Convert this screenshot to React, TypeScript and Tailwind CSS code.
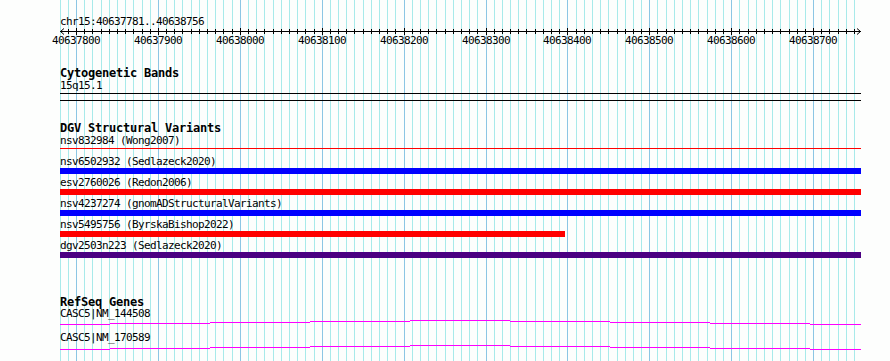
import React from 'react';

const START = 40637800;
const PX = 0.819;
const toX = (bp: number) => 76 + (bp - START) * PX;

const gridBps: number[] = [];
for (let bp = 40637780; bp <= 40638750; bp += 10) gridBps.push(bp);

const variants = [
  { label: 'nsv832984 (Wong2007)', color: 'bg-[#ff0000]', thin: true, width: 801 },
  { label: 'nsv6502932 (Sedlazeck2020)', color: 'bg-[#0000ff]', thin: false, width: 801 },
  { label: 'esv2760026 (Redon2006)', color: 'bg-[#ff0000]', thin: false, width: 801 },
  { label: 'nsv4237274 (gnomADStructuralVariants)', color: 'bg-[#0000ff]', thin: false, width: 801 },
  { label: 'nsv5495756 (ByrskaBishop2022)', color: 'bg-[#ff0000]', thin: false, width: 505 },
  { label: 'dgv2503n223 (Sedlazeck2020)', color: 'bg-[#4b0082]', thin: false, width: 801 },
];

// stepped magenta transcript line: [x0, x1, y]
const geneSegs: [number, number, number][] = [
  [0, 50, 5], [50, 150, 4], [150, 250, 3], [250, 350, 2], [350, 450, 1],
  [450, 550, 2], [550, 650, 3], [650, 750, 4], [750, 801, 5],
];

const txt = "text-[11px] leading-[11px] tracking-[-0.62px] h-[11px] whitespace-nowrap";
const title = "text-[12px] leading-[11px] tracking-[-0.22px] font-bold h-[11px] whitespace-nowrap";

const Grid = () => (
  <svg className="absolute left-0 top-0" width={890} height={361}>
    {gridBps.map((bp) => {
      const x = Math.round(toX(bp)) + 0.5;
      const major = bp % 100 === 0;
      return (
        <line key={bp} x1={x} x2={x} y1={0} y2={361} stroke={major ? '#8cc6e4' : '#a8eaea'} strokeWidth={1} />
      );
    })}
  </svg>
);

const Ruler = () => {
  const ticks = gridBps.filter((bp) => bp > 40637781);
  return (
    <svg width={802} height={20} className="block overflow-visible">
      <line x1={0} x2={801} y1={4.5} y2={4.5} stroke="#000" strokeWidth={1} />
      <polyline points="4,1.5 0.5,4.5 4,7.5" fill="none" stroke="#000" strokeWidth={1} />
      <polyline points="797,1.5 800.5,4.5 797,7.5" fill="none" stroke="#000" strokeWidth={1} />
      {ticks.map((bp) => {
        const x = Math.round(toX(bp)) - 60 + 0.5;
        const major = bp % 100 === 0;
        return <line key={bp} x1={x} x2={x} y1={major ? 1 : 2} y2={major ? 8 : 7} stroke="#000" strokeWidth={1} />;
      })}
      {ticks.filter((bp) => bp % 100 === 0).map((bp) => (
        <text
          key={'l' + bp}
          x={Math.round(toX(bp)) - 60}
          y={17}
          textAnchor="middle"
          fontSize={11}
          letterSpacing={-0.62}
          fontFamily="'DejaVu Sans Mono', monospace"
          fill="#000"
        >
          {bp}
        </text>
      ))}
    </svg>
  );
};

const GeneRow = ({ label, offset }: { label: string; offset: number }) => (
  <div>
    <div className={txt}>{label}</div>
    <svg width={801} height={13} className="block">
      {geneSegs.map(([x0, x1, y], i) => (
        <rect key={i} x={x0} y={y + offset} width={x1 - x0} height={1} fill="#ff00ff" />
      ))}
    </svg>
  </div>
);

export default function App() {
  return (
    <div className="relative w-[890px] h-[361px] overflow-hidden bg-[#fdfefd] text-black font-['DejaVu_Sans_Mono',monospace]">
      <Grid />
      <div className="relative pl-[60px] pt-[16px] w-[861px]">
        {/* Ruler */}
        <div className={txt}>chr15:40637781..40638756</div>
        <Ruler />

        {/* Cytogenetic Bands */}
        <div className={`${title} mt-[21px]`}>Cytogenetic Bands</div>
        <div className={`${txt} mt-[1px]`}>15q15.1</div>
        <div className="mt-[2px] h-[8px] border-y border-black" />

        {/* DGV Structural Variants */}
        <div className={`${title} mt-[22px]`}>DGV Structural Variants</div>
        <div className="mt-[1px]">
          {variants.map((v) => (
            <div key={v.label} className="h-[21px]">
              <div className={txt}>{v.label}</div>
              <div className="mt-[1px] h-[6px]">
                {v.thin ? (
                  <div className={`${v.color} h-px mt-[2px]`} style={{ width: v.width }} />
                ) : (
                  <div className={`${v.color} h-[6px]`} style={{ width: v.width }} />
                )}
              </div>
            </div>
          ))}
        </div>

        {/* RefSeq Genes */}
        <div className={`${title} mt-[36px]`}>RefSeq Genes</div>
        <GeneRow label="CASC5|NM_144508" offset={0} />
        <GeneRow label="CASC5|NM_170589" offset={1} />
      </div>
    </div>
  );
}
